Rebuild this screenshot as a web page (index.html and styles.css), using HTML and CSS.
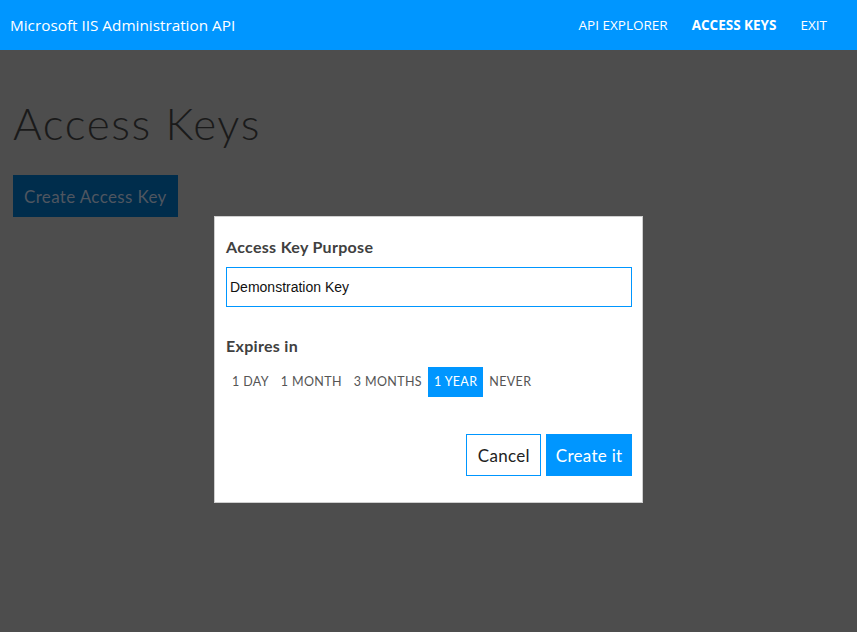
FILE: index.html
```html
<!DOCTYPE html>
<html>
<head>
<meta charset="utf-8">
<link rel="stylesheet" href="styles.css">
</head>
<body>
<header class="topbar">
  <div class="brand">Microsoft IIS Administration API</div>
  <nav class="nav">
    <a class="nav-item">API EXPLORER</a>
    <a class="nav-item active">ACCESS KEYS</a>
    <a class="nav-item">EXIT</a>
  </nav>
</header>
<main class="page">
  <h1 class="title">Access Keys</h1>
  <button class="create-btn">Create Access Key</button>
</main>
<div class="modal">
  <label class="field-label">Access Key Purpose</label>
  <input class="text-input" type="text" value="Demonstration Key">
  <div class="field-label expires">Expires in</div>
  <div class="options">
    <span class="opt">1 DAY</span>
    <span class="opt">1 MONTH</span>
    <span class="opt">3 MONTHS</span>
    <span class="opt selected">1 YEAR</span>
    <span class="opt">NEVER</span>
  </div>
  <div class="actions">
    <button class="btn btn-outline">Cancel</button>
    <button class="btn btn-primary">Create it</button>
  </div>
</div>
</body>
</html>
```
FILE: styles.css
```css
html, body {
  margin: 0;
  padding: 0;
  height: 100%;
}
body {
  background: #4d4d4d;
  font-family: "Lato", "Open Sans", sans-serif;
  position: relative;
}
.topbar {
  height: 50px;
  background: #0096ff;
  display: flex;
  align-items: center;
  justify-content: space-between;
  padding: 0 30px 0 10px;
  font-family: "Open Sans", "Noto Sans", sans-serif;
  color: #fff;
}
.brand {
  font-size: 15.3px;
}
.nav {
  display: flex;
  gap: 24px;
}
.nav-item {
  font-size: 13.5px;
  color: #fff;
}
.nav-item.active {
  font-weight: 700;
}
.page {
  padding: 46px 13px 0;
}
.title {
  margin: 0;
  font-weight: 300;
  font-size: 44px;
  line-height: 54px;
  letter-spacing: 1.6px;
  color: #1a1a1a;
}
.create-btn {
  margin-top: 25px;
  height: 42px;
  padding: 0 11px;
  border: none;
  background: #002d4c;
  color: #4f5660;
  font-family: "Lato", sans-serif;
  font-size: 17px;
  letter-spacing: 0.35px;
}
.modal {
  position: absolute;
  left: 214px;
  top: 216px;
  width: 406px;
  padding: 19px 10px 26px 11px;
  background: #fff;
  border: 1px solid #cfcfcf;
  display: flex;
  flex-direction: column;
}
.field-label {
  font-size: 16px;
  font-weight: 700;
  color: #404040;
  letter-spacing: 0.3px;
  line-height: 22px;
}
.text-input {
  margin-top: 9px;
  height: 40px;
  box-sizing: border-box;
  border: 1px solid #0096ff;
  padding: 0 3px;
  font-family: "Liberation Sans", Arial, sans-serif;
  font-size: 14px;
  color: #111;
  outline: none;
}
.expires {
  margin-top: 28px;
}
.options {
  display: flex;
  margin-top: 10px;
}
.opt {
  height: 30px;
  line-height: 30px;
  padding: 0 6px;
  font-size: 12.5px;
  color: #555;
  letter-spacing: 0.35px;
}
.opt.selected {
  background: #0096ff;
  color: #fff;
}
.actions {
  display: flex;
  justify-content: flex-end;
  gap: 5px;
  margin-top: 37px;
}
.btn {
  height: 42px;
  font-family: "Lato", sans-serif;
  font-size: 17px;
  letter-spacing: 0.3px;
  cursor: pointer;
}
.btn-outline {
  padding: 0 10.5px;
  background: #fff;
  border: 1px solid #0096ff;
  color: #222;
}
.btn-primary {
  padding: 0 8.5px;
  background: #0096ff;
  border: 1px solid #0096ff;
  color: #fff;
}
```
